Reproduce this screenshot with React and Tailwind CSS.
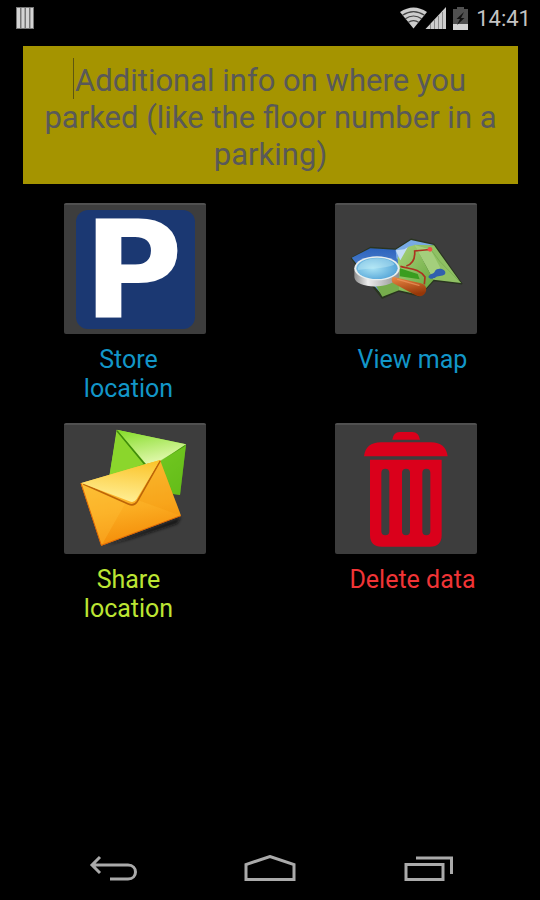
import { useState } from 'react'

const actions = [
  { id: 'store', label: 'Store location', color: 'text-[#1296c8]', align: 'self-start', Icon: ParkingIcon },
  { id: 'map', label: 'View map', color: 'text-[#1296c8]', align: 'self-end', Icon: MapIcon },
  { id: 'share', label: 'Share location', color: 'text-[#bce533]', align: 'self-start', Icon: MailIcon },
  { id: 'delete', label: 'Delete data', color: 'text-[#f03436]', align: 'self-end', Icon: TrashIcon },
]

function App() {
  const [info, setInfo] = useState('')

  return (
    <div className="min-h-screen flex flex-col bg-black font-['Roboto',sans-serif]">
      <StatusBar />
      <main className="flex-1 pt-[10px]">
        <div className="relative ml-[23px] mr-[22px]">
          <textarea
            aria-label="Parking info"
            rows={3}
            value={info}
            onChange={(e) => setInfo(e.target.value)}
            placeholder="Additional info on where you parked (like the floor number in a parking)"
            className="block w-full h-[138px] resize-none overflow-hidden bg-[#a59400] px-4 pt-4 text-center text-[31px] leading-[37px] text-[#595959] placeholder:text-[#595959] outline-none"
          />
          {/* text cursor */}
          <span className="absolute left-[50px] top-3 h-[41px] w-px bg-[#5e5610]" />
        </div>
        <div className="grid grid-cols-[142px_142px] justify-between gap-y-5 pl-16 pr-[63px] pt-[19px]">
          {actions.map((action) => (
            <Action key={action.id} {...action} />
          ))}
        </div>
      </main>
      <NavBar />
    </div>
  )
}

function StatusBar() {
  return (
    <header className="flex h-9 items-center justify-between pl-4 pr-[9px]">
      <svg className="h-[22px] w-[18px]" viewBox="0 0 18 22">
        <path d="M0 0h18v22H0z" fill="#777" />
        <path d="M1 1h3v20H1zM5.500 1h3v20h-3zM10 1h3v20h-3zM14.500 1h2.500v20h-2.500z" fill="#d4d4d4" />
      </svg>
      <div className="flex items-center">
        <svg className="h-[22px] w-[47px]" viewBox="0 0 47 22">
          <path d="M0 5Q13.500-4 27 5L13.500 21.500z" fill="#ccc" />
          <path d="M2.500 8.300Q13.500 1 24.500 8.300M5 12Q13.500 6 22 12M8 15.600Q13.500 11.500 19 15.600" fill="none" stroke="#444" strokeWidth="1.200" />
          <path d="M25.500 22L46 0v22z" fill="#ccc" />
          <path d="M30.500 17v5M34.500 13v9M38.500 9v13M42.500 5v17" stroke="#888" strokeWidth="1" />
        </svg>
        <svg className="ml-[6px] h-[23px] w-[15px]" viewBox="0 0 15 23">
          <path d="M4 0h7v2h4v21H0V2h4z" fill="#505050" />
          <path d="M0 17h15v6H0z" fill="#d4d4d4" />
          <path d="M11 5L3.500 12h3.500L4 18l7.500-7H8z" fill="#111" />
        </svg>
        <time className="ml-2 pt-[2px] text-[22px] leading-[34px] text-[#c4c4c4]">14:41</time>
      </div>
    </header>
  )
}

function Action({ id, label, color, align, Icon }) {
  return (
    <div className="flex flex-col">
      <button
        id={id}
        type="button"
        className="flex h-[131px] items-center justify-center rounded-xs border-t-2 border-[#505050] bg-[#3d3d3d]"
      >
        <Icon />
      </button>
      <label
        htmlFor={id}
        className={`mt-[11px] flex h-[58px] w-[129px] justify-center px-4 text-center text-[25px] leading-[29px] ${align} ${color}`}
      >
        <span className={label.endsWith('location') ? '' : 'whitespace-nowrap'}>{label}</span>
      </label>
    </div>
  )
}

function ParkingIcon() {
  return (
    <span className="flex size-[119px] items-center justify-center rounded-xl bg-[#1b3872] pr-1 font-['DejaVu_Sans',sans-serif] text-[136px] leading-none font-bold text-white">
      P
    </span>
  )
}

function MapIcon() {
  return (
    <svg className="w-full" viewBox="30 30 426 387">
      <defs>
        <linearGradient id="land" x1="0" y1="0" x2="1" y2="1">
          <stop offset="0" stopColor="#a9d27a" />
          <stop offset="1" stopColor="#64a63c" />
        </linearGradient>
        <linearGradient id="sea" x1="0" y1="0" x2="0" y2="1">
          <stop offset="0" stopColor="#2d63bd" />
          <stop offset="1" stopColor="#7dafe8" />
        </linearGradient>
        <radialGradient id="glass" cx="0.4" cy="0.5" r="0.6">
          <stop offset="0" stopColor="#a8e2f4" />
          <stop offset="1" stopColor="#55a5d8" />
        </radialGradient>
        <linearGradient id="rim" x1="0" y1="0" x2="1" y2="0">
          <stop offset="0" stopColor="#8d8d8d" />
          <stop offset="0.3" stopColor="#ededed" />
          <stop offset="1" stopColor="#8e8e8e" />
        </linearGradient>
        <linearGradient id="wood" x1="0" y1="0" x2="0.300" y2="1">
          <stop offset="0" stopColor="#ee8a46" />
          <stop offset="1" stopColor="#963708" />
        </linearGradient>
      </defs>
      <path d="M80 190L136 158L212 163L258 133L327 149L410 266L326 256L282 302L220 288L172 309L145 275z" fill="#293a1d" stroke="#293420" strokeWidth="5" strokeLinejoin="round" />
      <path d="M80 188L136 160L212 164L222 196L176 304L145 270z" fill="url(#sea)" />
      <path d="M148 264L236 205L224 285L172 305z" fill="#76ad4c" />
      <path d="M212 164L258 135L327 150L270 160L232 205L214 190z" fill="#78aae5" />
      <path d="M218 188L250 155L270 150L308 222L326 254L285 300L222 286z" fill="url(#land)" />
      <path d="M268 149L327 151L408 264L326 254L302 210z" fill="#8fc063" />
      <path d="M268 149L302 210L326 254L346 218L317 164z" fill="#a4cf7c" />
      <path d="M212 166L226 196L248 157L238 163z" fill="#c3dcf5" />
      <path d="M317 163L345 200L408 264" fill="none" stroke="#72a94d" strokeWidth="2" />
      <path d="M244 213C260 208 271 195 269 168L300 165L318 163M226 214C252 222 282 219 300 246L298 268" fill="none" stroke="#ac3320" strokeWidth="5" />
      <circle cx="315" cy="163" r="7" fill="#ef4e46" />
      <path d="M310 246C314 235 328 238 330 228C337 215 364 222 361 235C357 246 342 240 332 247C325 253 313 253 310 246z" fill="#315fae" />
      <path d="M225 220L278 237L284 253L224 244z" fill="#399d1f" />
      <path d="M88 218V246C91 285 207 283 223 244V218z" fill="url(#rim)" />
      <ellipse cx="156" cy="220" rx="68" ry="36" fill="#e8eeee" />
      <ellipse cx="156" cy="220" rx="62" ry="32" fill="url(#glass)" />
      <path d="M99 225C127 218 173 224 208 209C204 199 187 191 160 190C124 189 96 205 99 225z" fill="#c8eff8" opacity="0.400" />
      <path d="M206 246L288 265C305 269 307 285 300 295C294 305 282 306 272 301L205 265C198 258 199 248 206 246z" fill="url(#wood)" />
      <path d="M218 253L282 271" stroke="#f5a169" strokeWidth="4" strokeLinecap="round" opacity="0.600" />
    </svg>
  )
}

function MailIcon() {
  return (
    <svg className="w-full" viewBox="42 30 426 387">
      <defs>
        <linearGradient id="green" x1="0" y1="0" x2="1" y2="1">
          <stop offset="0" stopColor="#9ee53e" />
          <stop offset="1" stopColor="#57ae12" />
        </linearGradient>
        <linearGradient id="greenFlap" x1="0" y1="0" x2="0.400" y2="1">
          <stop offset="0" stopColor="#83dc27" />
          <stop offset="1" stopColor="#e0f8ab" />
        </linearGradient>
        <linearGradient id="orange" x1="0.200" y1="0" x2="0.400" y2="1">
          <stop offset="0" stopColor="#fbc83d" />
          <stop offset="0.600" stopColor="#fbad22" />
          <stop offset="1" stopColor="#f48c08" />
        </linearGradient>
        <linearGradient id="orangeFlap" x1="0.600" y1="0" x2="0.400" y2="1">
          <stop offset="0" stopColor="#fbc52d" />
          <stop offset="1" stopColor="#fff098" />
        </linearGradient>
        <filter id="soft">
          <feGaussianBlur stdDeviation="5" />
        </filter>
      </defs>
      <path d="M170 390L393 306L382 326L240 372z" fill="#111" opacity="0.800" filter="url(#soft)" />
      <path d="M200 44L408 88L390 240L175 204z" fill="url(#green)" />
      <path d="M201 47L284 145L177 190z" fill="#8bd62c" />
      <path d="M201 47L282 145L330 136L406 91" fill="none" stroke="#3f8c0b" strokeWidth="5" />
      <path d="M203 45L408 88L334 137L288 147z" fill="url(#greenFlap)" />
      <path d="M332 136L408 91L390 240L370 238z" fill="#6bc51c" opacity="0.600" />
      <path d="M92 205L330 135L393 302L154 392z" fill="url(#orange)" />
      <path d="M92 205L226 265L154 392z" fill="#ffc43a" opacity="0.300" />
      <path d="M330 135L393 302L263 255z" fill="#ee8f08" opacity="0.250" />
      <path d="M100 207L235 267Q252 275 262 259L331 137" fill="none" stroke="#bd6508" strokeWidth="5" />
      <path d="M94 204L330 135L260 252Q252 265 238 259z" fill="url(#orangeFlap)" />
      <path d="M93 205L154 391L393 302" fill="none" stroke="#dc6605" strokeWidth="3" />
    </svg>
  )
}

function TrashIcon() {
  return (
    <svg className="w-full" viewBox="30 30 426 387" fill="#da001b">
      <path d="M202 74Q205 51 224 51H262Q281 51 285 74z" />
      <path d="M117 124Q122 82 168 82H318Q362 82 368 124z" />
      <path
        fillRule="evenodd"
        d="M135 134H350V360Q350 395 315 395H170Q135 395 135 360zM169 174V349Q169 361 181 361T193 349V174Q193 161 181 161T169 174zM231 174V349Q231 361 243 361T255 349V174Q255 161 243 161T231 174zM292 174V349Q292 361 304 361T316 349V174Q316 161 304 161T292 174z"
      />
    </svg>
  )
}

function NavBar() {
  return (
    <nav className="flex h-[62px] items-center justify-around pl-[35px] pr-8">
      <button type="button" aria-label="Back">
        <svg className="h-7 w-12" viewBox="0 0 48 28" fill="none" stroke="#aaa" strokeWidth="3">
          <path d="M11 2L3 10L11 18M3 10H39C49 10 49 24 39 24H21" />
        </svg>
      </button>
      <button type="button" aria-label="Home">
        <svg className="h-7 w-[52px]" viewBox="0 0 52 28" fill="none" stroke="#aaa" strokeWidth="3">
          <path d="M2 24.500V9.500L26 1.500L50 9.500V24.500z" />
        </svg>
      </button>
      <button type="button" aria-label="Recent apps">
        <svg className="h-7 w-[50px]" viewBox="0 0 50 28" fill="none" stroke="#aaa" strokeWidth="3">
          <path d="M2 9.500H39V24.500H2zM12 3H47.500V19" />
        </svg>
      </button>
    </nav>
  )
}

export default App
